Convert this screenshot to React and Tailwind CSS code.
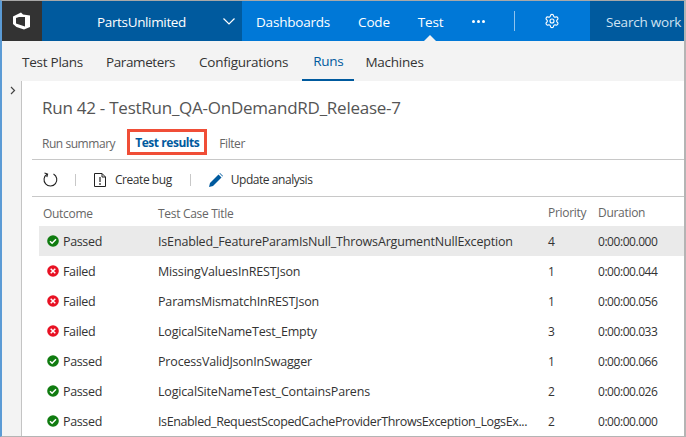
import React from "react";
import { Settings } from "lucide-react";

const rows = [
  ["Passed", "IsEnabled_FeatureParamIsNull_ThrowsArgumentNullException", "4", "0:00:00.000"],
  ["Failed", "MissingValuesInRESTJson", "1", "0:00:00.044"],
  ["Failed", "ParamsMismatchInRESTJson", "1", "0:00:00.056"],
  ["Failed", "LogicalSiteNameTest_Empty", "3", "0:00:00.033"],
  ["Passed", "ProcessValidJsonInSwagger", "1", "0:00:00.066"],
  ["Passed", "LogicalSiteNameTest_ContainsParens", "2", "0:00:00.026"],
  ["Passed", "IsEnabled_RequestScopedCacheProviderThrowsException_LogsEx...", "2", "0:00:00.000"],
];

function Outcome({ kind }) {
  return (
    <svg width="12" height="12" viewBox="0 0 12 12" className="shrink-0">
      {kind === "Passed" ? (
        <>
          <circle cx="6" cy="6" r="5.8" fill="#107c10" />
          <path d="M3 6.2 5.1 8.2 9 4.2" fill="none" stroke="#fff" strokeWidth="1.5" />
        </>
      ) : (
        <>
          <circle cx="6" cy="6" r="5.8" fill="#e81123" />
          <path d="M3.7 3.7 8.3 8.3M8.3 3.7 3.7 8.3" fill="none" stroke="#fff" strokeWidth="1.5" />
        </>
      )}
    </svg>
  );
}

function Logo() {
  return (
    <svg width="20" height="20" viewBox="0 0 20 20">
      <path
        d="M1 5.5 9 1.5 11 3.5 18 4.5V16L12 18.5 4.5 16 1 13ZM4 7V12.5L13 15.5V6L7 6Z"
        fill="#fff"
        fillRule="evenodd"
      />
    </svg>
  );
}

export default function App() {
  return (
    <div
      className="w-[686px] h-[437px] overflow-hidden flex flex-col bg-white border-t border-t-[#a8a8a8] border-l-2 border-l-[#5b9bd5] border-r-2 border-r-[#b4b4b4] border-b border-b-[#b4b4b4] text-[12px] text-[#333]"
      style={{ fontFamily: '"Open Sans", "Noto Sans", sans-serif' }}
    >
      <header className="h-10 shrink-0 flex items-stretch bg-[#0078d7] text-white text-[13.5px] tracking-[-0.2px]">
        <div className="w-10 bg-[#333333] flex items-center justify-center">
          <Logo />
        </div>
        <div className="w-[200px] bg-[#005a9e] flex items-center pl-[55px] pr-[7px] justify-between">
          <span className="pt-[2px] tracking-[-0.35px]">PartsUnlimited</span>
          <svg width="12" height="7" viewBox="0 0 12 7">
            <path d="M.5.5 6 6 11.5.5" fill="none" stroke="#fff" strokeWidth="1.2" />
          </svg>
        </div>
        <nav className="flex-1 relative flex items-center pl-[14px]">
          <span className="pt-[2px]">Dashboards</span>
          <span className="ml-[28px] pt-[2px]">Code</span>
          <span className="ml-[28px] pt-[2px]">Test</span>
          <span className="ml-[29px] flex gap-[2px]">
            <i className="w-[3px] h-[3px] rounded-full bg-white" />
            <i className="w-[3px] h-[3px] rounded-full bg-white" />
            <i className="w-[3px] h-[3px] rounded-full bg-white" />
          </span>
          <span className="ml-[29px] w-px h-5 bg-[#8fc3ee]" />
          <Settings size={16} strokeWidth={1.7} className="ml-[29px]" />
          <span className="absolute left-[182px] bottom-0 w-0 h-0 border-x-[6px] border-x-transparent border-b-[6px] border-b-[#f3f3f3]" />
        </nav>
        <div className="w-[94px] bg-[#005a9e] flex items-center pl-4 text-[#cfe3f3] whitespace-nowrap overflow-hidden">
          <span className="pt-[2px]">Search work</span>
        </div>
      </header>

      <div className="h-10 shrink-0 flex items-stretch bg-[#f3f3f3] pl-5 text-[13.5px] tracking-[-0.25px] text-[#333]">
        <span className="flex items-center pt-[2px]">Test Plans</span>
        <span className="flex items-center pt-[2px] ml-[23px] tracking-[-0.4px]">Parameters</span>
        <span className="flex items-center pt-[2px] ml-[24px]">Configurations</span>
        <span className="flex items-center pt-[2px] ml-[14px] px-[11px] text-[#005a9e] border-b-2 border-[#005a9e]">Runs</span>
        <span className="flex items-center pt-[2px] ml-[11px]">Machines</span>
      </div>

      <div className="flex-1 min-h-0 flex">
        <aside className="w-5 shrink-0 bg-[#f3f3f3] border-r border-[#c4c4c4] pt-[5px] pl-[8px]">
          <svg width="6" height="9" viewBox="0 0 6 9">
            <path d="M1 1 4.5 4.5 1 8" fill="none" stroke="#444" strokeWidth="1.2" />
          </svg>
        </aside>

        <div className="w-[508px] shrink-0 flex flex-col overflow-hidden">
          <h1 className="h-[44px] pt-[14px] pl-[20px] text-[17px] leading-[26px] text-[#555] font-normal whitespace-nowrap tracking-[-0.25px]">
            Run 42 - TestRun_QA-OnDemandRD_Release-7
          </h1>
          <div className="h-[36px] ml-[10px] border-b border-[#c8c8c8] flex items-center pl-[10px] tracking-[-0.45px]">
            <span className="text-[#666] pt-[4px]">Run summary</span>
            <span className="ml-[12px] h-[26px] px-[5px] pt-[2px] flex items-center border-[3px] border-[#f04e37] font-bold text-[#005a9e] tracking-[-0.45px]">
              Test results
            </span>
            <span className="ml-[12px] text-[#666] pt-[4px]">Filter</span>
          </div>
          <div className="h-[37px] ml-[10px] border-b border-[#c8c8c8] flex items-center pl-[11px] pt-[3px] tracking-[-0.45px] text-[#333]">
            <svg width="15" height="15" viewBox="0 0 15 15">
              <path d="M4 2.2A6.4 6.4 0 1 0 10.5 2" fill="none" stroke="#222" strokeWidth="1.1" />
              <path d="M1.5 1 4.6 2 3.8 5" fill="none" stroke="#222" strokeWidth="1.1" />
            </svg>
            <span className="ml-[17px] w-px h-3 bg-[#c8c8c8]" />
            <svg width="12" height="14" viewBox="0 0 12 14" className="ml-[18px]">
              <path d="M.5.5H8L11.5 4V13.5H.5ZM8 .5V4H11.5" fill="none" stroke="#222" />
              <path d="M6 4V9M6 10V12" stroke="#222" strokeWidth="1.2" />
            </svg>
            <span className="ml-[9px]">Create bug</span>
            <span className="ml-[18px] w-px h-3 bg-[#c8c8c8]" />
            <svg width="14" height="14" viewBox="0 0 14 14" className="ml-[18px]">
              <path d="M0 14 1 10 9.5 1.5 12.5 4.5 4 13Z" fill="#005a9e" />
              <path d="M10.5.5 11 0 14 3 13.5 3.5Z" fill="#005a9e" />
            </svg>
            <span className="ml-[8px]">Update analysis</span>
          </div>
          <div className="h-[29px] flex items-center ml-[21px] pt-[4px] text-[#666] tracking-[-0.3px]">
            <span className="w-[115px]">Outcome</span>
            <span>Test Case Title</span>
          </div>
          <div className="ml-[17px] text-[12.5px]">
            {rows.map((r, i) => (
              <div key={i} className={`h-[30px] flex items-center pl-[8px] whitespace-nowrap overflow-hidden ${i === 0 ? "bg-[#eaeaea]" : ""}`}>
                <Outcome kind={r[0]} />
                <span className="ml-1 w-[95px] shrink-0 pt-[2px] tracking-[-0.35px]">{r[0]}</span>
                <span className={`shrink-0 pt-[2px] ${i === 6 ? "tracking-[-0.38px]" : "tracking-[-0.17px]"}`}>{r[1]}</span>
              </div>
            ))}
          </div>
        </div>

        <div className="flex-1 min-w-0 flex flex-col -mt-px">
          <div className="h-[80px] border-b border-[#c8c8c8]" />
          <div className="h-[37px] border-b border-[#c8c8c8]" />
          <div className="h-[29px] flex items-center pl-[18px] pt-[2px] text-[#666] tracking-[-0.3px]">
            <span className="w-[50px]">Priority</span>
            <span>Duration</span>
          </div>
          {rows.map((r, i) => (
            <div key={i} className={`h-[30px] flex items-center pl-[18px] pt-[2px] tracking-[-0.45px] ${i === 0 ? "bg-[#eaeaea]" : ""}`}>
              <span className="w-[50px]">{r[2]}</span>
              <span>{r[3]}</span>
            </div>
          ))}
        </div>
      </div>
    </div>
  );
}
